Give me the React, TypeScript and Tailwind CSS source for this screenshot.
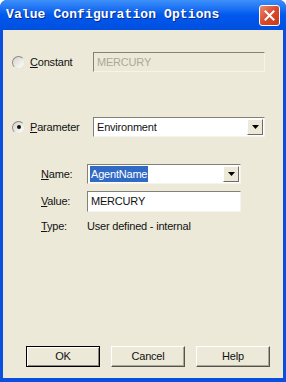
import React from "react";

function Radio({ checked }: { checked?: boolean }) {
  return (
    <span className="relative flex h-[13px] w-[13px] shrink-0 items-center justify-center rounded-full border border-t-[#8a8a84] border-l-[#8a8a84] border-r-[#e8e6dc] border-b-[#e8e6dc] bg-gradient-to-br from-[#d6d3c8] to-white">
      {checked && <span className="h-[4px] w-[4px] rounded-full bg-[#111]" />}
    </span>
  );
}

function Arrow() {
  return (
    <span className="flex h-[16px] w-[16px] shrink-0 items-center justify-center border border-t-white border-l-white border-r-[#6d6b63] border-b-[#6d6b63] bg-[#ece9d8]">
      <svg width="7" height="4" viewBox="0 0 7 4">
        <path d="M0 0h7L3.5 4z" fill="#000" />
      </svg>
    </span>
  );
}

function Sunken({ className, children }: { className?: string; children?: React.ReactNode }) {
  return (
    <div
      className={
        "flex items-center border border-t-[#828177] border-l-[#828177] border-r-[#f4f3ee] border-b-[#f4f3ee] " +
        (className ?? "")
      }
    >
      {children}
    </div>
  );
}

function Btn({ label, def }: { label: string; def?: boolean }) {
  return (
    <div
      className={
        "flex h-[21px] w-[74px] items-center justify-center bg-[#ece9d8] text-[#111] " +
        (def
          ? "border border-black shadow-[inset_1px_1px_0_#fff,inset_-1px_-1px_0_#8a8880]"
          : "border border-t-white border-l-white border-r-[#55534c] border-b-[#55534c] shadow-[inset_-1px_-1px_0_#aca899]")
      }
    >
      {label}
    </div>
  );
}

export default function App() {
  return (
    <div className="h-[382px] w-[286px] bg-white font-['Liberation_Sans',Arial,sans-serif] text-[11px] tracking-[-0.2px] text-[#111]">
      <div className="flex h-full flex-col overflow-hidden rounded-t-[7px] bg-[#0a4fe0]">
        {/* title bar */}
        <div className="flex h-[30px] shrink-0 items-center justify-between bg-gradient-to-b from-[#3d8ff8] via-[#0058ee] to-[#0150df] pl-[6px] pr-[6px]">
          <span className="font-['Liberation_Mono',monospace] text-[13px] font-bold tracking-[0.1px] text-white [text-shadow:1px_1px_0_#0a2a8a]">
            Value Configuration Options
          </span>
          <span className="flex h-[21px] w-[21px] items-center justify-center rounded-[3px] border border-white bg-gradient-to-br from-[#e8886d] via-[#d9492a] to-[#c63a1c]">
            <svg width="11" height="11" viewBox="0 0 11 11">
              <path d="M1.5 1.5l8 8M9.5 1.5l-8 8" stroke="#fff" strokeWidth="2" strokeLinecap="square" />
            </svg>
          </span>
        </div>

        {/* body */}
        <div className="mx-[3px] mb-[4px] flex flex-1 flex-col bg-[#ece9d8] pl-[9px]">
          <div className="mt-[22px] flex h-[20px] items-center">
            <Radio />
            <span className="ml-[5px] w-[63px]">
              <u>C</u>onstant
            </span>
            <Sunken className="h-[20px] w-[172px] bg-[#ece9d8] pl-[3px] text-[#aca899]">MERCURY</Sunken>
          </div>

          <div className="mt-[45px] flex h-[20px] items-center">
            <Radio checked />
            <span className="ml-[5px] w-[63px]">
              <u>P</u>arameter
            </span>
            <Sunken className="h-[20px] w-[172px] justify-between bg-white pl-[3px] pr-[1px]">
              <span>Environment</span>
              <Arrow />
            </Sunken>
          </div>

          <div className="mt-[27px] flex flex-col gap-[7px] pl-[29px]">
            <div className="flex h-[20px] items-center">
              <span className="w-[46px]">
                <u>N</u>ame:
              </span>
              <Sunken className="h-[20px] w-[154px] justify-between bg-white pl-[2px] pr-[1px]">
                <span className="bg-[#316ac5] px-[1px] text-white">AgentName</span>
                <Arrow />
              </Sunken>
            </div>
            <div className="flex h-[21px] items-center">
              <span className="w-[46px]">
                <u>V</u>alue:
              </span>
              <Sunken className="h-[21px] w-[154px] bg-white pl-[3px]">MERCURY</Sunken>
            </div>
            <div className="flex h-[14px] items-center">
              <span className="w-[46px]">
                <u>T</u>ype:
              </span>
              <span>User defined - internal</span>
            </div>
          </div>

          <div className="mt-auto mb-[11px] flex gap-[11px] pl-[14px]">
            <Btn label="OK" def />
            <Btn label="Cancel" />
            <Btn label="Help" />
          </div>
        </div>
      </div>
    </div>
  );
}
